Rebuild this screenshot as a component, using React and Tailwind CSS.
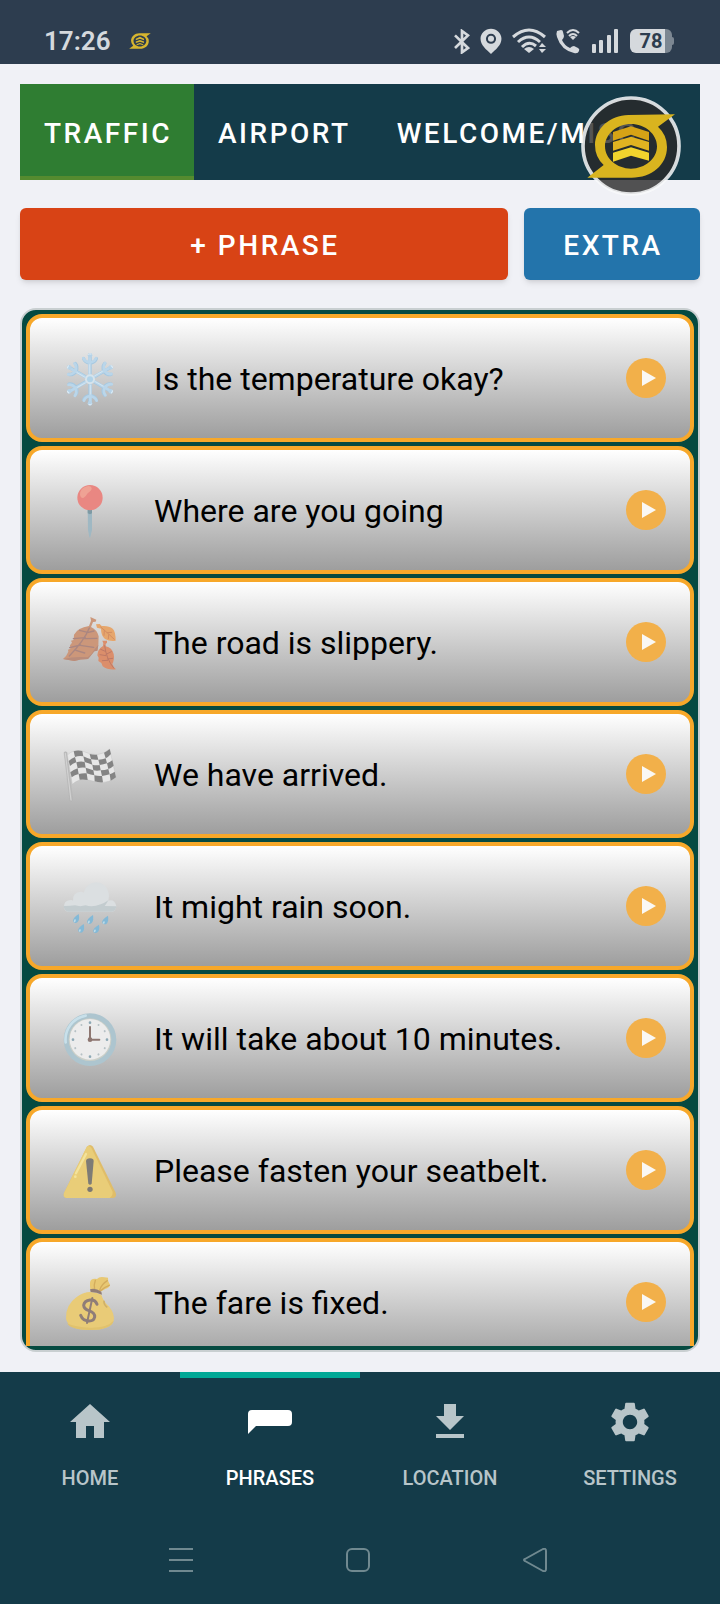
import { MdFileDownload, MdSettings } from "react-icons/md";

// Emoji style drawings, one for each phrase
const Snowflake = () => (
  <svg viewBox="180 144 180 180" className="size-[60px] shrink-0" aria-hidden="true">
    {[0, 60, 120, 180, 240, 300].map((angle) => (
      <g key={angle} transform={`rotate(${angle} 270 238)`} fill="none" strokeLinecap="round" strokeLinejoin="round">
        <path d="M270 222V166M251 176Q254 187 270 190Q286 187 289 176" stroke="#a5c8e1" strokeWidth="10" />
        <path d="M269 222V166M250 174Q254 185 270 188Q285 185 288 174" stroke="#bad6ea" strokeWidth="8" />
        <path d="M268 220V194" stroke="#dcebf4" strokeWidth="2" />
        <circle cx="270" cy="166" r="7" fill="#b6d3e8" />
        <path d="M266 163Q269 160 273 162" stroke="#e3eff6" strokeWidth="3" />
      </g>
    ))}
    <circle cx="270" cy="238" r="15" fill="#d7e4ec" />
    <circle cx="270" cy="238" r="9" fill="#b0d3e9" />
  </svg>
);

const Pin = () => (
  <svg viewBox="180 540 180 180" className="size-[60px] shrink-0" aria-hidden="true">
    <path d="M263 625H276V690L271 711Q270 716 268 711L264 690Z" fill="#9fb8c3" />
    <path d="M263 625H276V640Q270 645 263 640Z" fill="#7d9aa4" />
    <circle cx="270" cy="593" r="38" fill="#e98782" />
    <path d="M240 583Q241 565 257 560Q272 555 275 564Q276 571 263 580Q257 591 250 594Q241 595 240 583Z" fill="#efa294" />
  </svg>
);

const Leaves = () => (
  <svg viewBox="120 96 180 180" className="size-[60px] shrink-0" aria-hidden="true">
    <path d="M211 111L229 119L227 125L219 126L213 141Q232 150 236 169L235 195L232 212L223 214L211 229L204 237Q180 237 163 243L129 237Q139 230 145 215L144 209L151 206L150 196L156 188L153 182L161 180L162 164Q173 143 207 138L213 122Z" fill="#cc977a" />
    <path d="M129 237Q165 228 203 232Q216 222 225 206L235 195L232 212L223 214L204 237Q180 237 163 243Z" fill="#b98c7b" />
    <path d="M208 144Q193 181 148 228M203 157L179 151M196 173L160 176M182 195L149 203M202 158L222 153M194 176L231 175M181 196L221 202M168 211L194 219" fill="none" stroke="#aa8681" strokeWidth="4" strokeLinecap="round" />
    <path d="M228 133L239 132L245 138Q266 136 278 146Q287 154 287 182Q270 185 255 177Q243 167 243 146L231 143Z" fill="#e6a66c" />
    <path d="M242 141Q262 158 283 178M253 151L252 166M261 158L275 157M266 164L265 176" fill="none" stroke="#d48d62" strokeWidth="3" strokeLinecap="round" />
    <path d="M247 182H261V188L257 192V199Q276 203 281 222Q284 239 277 252Q280 262 288 268Q264 271 248 259L244 249L235 243L236 233L232 226Q233 207 249 198L250 190Z" fill="#db8e6b" />
    <path d="M254 197Q259 238 281 264M256 214L242 208M258 227L240 224M263 241L247 242M258 223L274 215M262 237L278 235" fill="none" stroke="#bd7966" strokeWidth="3" strokeLinecap="round" />
  </svg>
);

const RaceFlag = () => (
  <svg viewBox="120 492 180 180" className="size-[60px] shrink-0" aria-hidden="true">
    <path d="M132 517Q136 513 141 517L158 661Q155 666 150 663Z" fill="#bdbdbd" stroke="#aaa" strokeWidth="1" />
    <path d="M136 519L153 661" stroke="#d3d3d3" strokeWidth="3" />
    <path d="M142 525Q160 507 187 513Q210 524 231 524Q254 521 269 507L288 592Q267 608 243 608Q218 603 196 598Q173 598 157 613Z" fill="#e7e7e7" stroke="#b9b9b9" strokeWidth="1" />
    <g fill="#848484">
      <path d="M161 514Q173 509 187 513L190 529Q177 526 165 531Z" />
      <path d="M209 522Q220 525 231 524L235 539Q224 540 213 538Z" />
      <path d="M252 518Q261 514 269 507L273 522Q265 531 257 535Z" />
      <path d="M146 543Q154 535 165 531L169 547Q158 551 150 558Z" />
      <path d="M190 529Q202 535 213 538L217 554Q205 550 194 546Z" />
      <path d="M235 539Q247 539 257 535L261 550Q250 554 239 555Z" />
      <path d="M169 547Q182 543 194 546L197 563Q185 561 173 565Z" />
      <path d="M217 554Q228 557 239 555L242 571Q231 573 220 571Z" />
      <path d="M261 550Q269 547 277 541L281 557Q274 564 265 567Z" />
      <path d="M151 577Q160 569 173 565L176 582Q164 585 155 592Z" />
      <path d="M197 563Q209 567 220 571L223 586Q212 585 200 580Z" />
      <path d="M242 571Q255 571 265 567L269 583Q257 587 246 588Z" />
      <path d="M176 582Q188 579 200 580L203 600Q191 597 179 599Z" />
      <path d="M223 586Q234 589 246 588L249 607Q235 608 224 604Z" />
      <path d="M269 583Q277 580 284 575L288 592Q281 598 272 602Z" />
    </g>
  </svg>
);

const RainCloud = () => (
  <svg viewBox="120 48 180 180" className="size-[60px] shrink-0" aria-hidden="true">
    <path d="M132 140Q132 124 147 121Q156 119 159 122Q158 99 177 96Q186 93 191 98Q197 70 228 67Q263 69 267 107L265 122Q284 117 289 138Q287 154 276 155H144Q133 154 132 140Z" fill="#dbdfe1" />
    <path d="M131 138Q153 138 165 136Q181 141 197 136Q217 143 242 133Q254 129 265 121Q259 132 254 138L289 139Q286 155 275 155H144Q132 152 131 138Z" fill="#c3cccf" />
    <g fill="#83b9d7">
      <path d="M176 162Q180 178 173 186Q166 192 160 185Q156 175 176 162Z" />
      <path d="M219 165Q222 181 215 189Q208 195 202 188Q198 178 219 165Z" />
      <path d="M264 167Q267 183 260 191Q253 196 247 189Q243 180 264 167Z" />
      <path d="M191 192Q195 207 188 216Q181 221 175 214Q171 205 191 192Z" />
      <path d="M237 194Q240 209 233 217Q226 222 220 216Q216 206 237 194Z" />
    </g>
    <path d="M165 180L164 184M207 184L206 188M252 186L251 189M180 210L179 213M225 211L224 214" stroke="#bcdbe9" strokeWidth="5" strokeLinecap="round" />
  </svg>
);

const Clock = () => (
  <svg viewBox="120 444 180 180" className="size-[60px] shrink-0" aria-hidden="true">
    <circle cx="210" cy="539" r="79" fill="#adc5cf" />
    <path d="M137 547A73 73 0 0 1 197 467" fill="none" stroke="#c8e0ea" strokeWidth="8" strokeLinecap="round" />
    <circle cx="210" cy="539" r="64" fill="#cbcfc8" />
    <circle cx="210" cy="538" r="61" fill="#ececec" />
    {[0, 30, 60, 90, 120, 150, 180, 210, 240, 270, 300, 330].map((angle) => (
      <circle key={angle} cx="210" cy="488" r={angle % 90 === 0 ? 4 : 3} fill={angle % 90 === 0 ? "#8da9b5" : "#b6c1c5"} transform={`rotate(${angle} 210 539)`} />
    ))}
    <path d="M210 501V539H238" fill="none" stroke="#8d7670" strokeWidth="6" strokeLinecap="round" />
    <circle cx="210" cy="539" r="7" fill="#8d7670" />
  </svg>
);

const Warning = () => (
  <svg viewBox="120 60 180 180" className="size-[60px] shrink-0" aria-hidden="true">
    <path d="M201 80Q210 70 219 80L287 218Q291 232 279 234H140Q128 232 132 219Z" fill="#e0bd69" />
    <path d="M200 81Q207 74 214 83L277 214Q281 225 269 234H140Q128 232 132 219Z" fill="#e9cd78" />
    <path d="M198 102L168 160" stroke="#f3e39b" strokeWidth="7" strokeLinecap="round" />
    <circle cx="166" cy="170" r="4" fill="#f3e39b" />
    <path d="M198 123Q199 115 210 115Q221 115 221 123L215 191Q210 197 205 191Z" fill="#7d7b76" />
    <circle cx="210" cy="208" r="8" fill="#7d7872" />
  </svg>
);

const MoneyBag = () => (
  <svg viewBox="120 456 180 180" className="size-[60px] shrink-0" aria-hidden="true">
    <path d="M211 507Q208 485 213 480Q221 474 231 477Q238 469 253 472L264 473Q262 483 270 494Q269 502 256 507L241 515Z" fill="#e8c873" />
    <path d="M226 481Q221 494 224 508M262 482Q244 493 239 511M268 496Q253 501 242 512" fill="none" stroke="#d3ac5d" strokeWidth="4" strokeLinecap="round" />
    <path d="M211 516Q228 516 244 524Q250 545 268 560Q285 583 281 602Q274 629 210 630Q144 629 138 596Q136 555 170 531Q191 516 211 516Z" fill="#e9cb77" />
    <path d="M141 610Q165 622 211 623Q260 624 281 602Q274 629 210 630Q152 630 141 610Z" fill="#e1c26d" />
    <path d="M252 542Q251 555 262 562" fill="none" stroke="#cfaf68" strokeWidth="5" />
    <path d="M210 508Q226 503 244 515L246 524Q230 516 212 516Z" fill="#927d76" />
    <g fill="none" stroke="#8f7d78" strokeLinecap="round">
      <path d="M231 553Q226 538 210 540Q193 542 191 556Q192 567 207 572Q225 578 224 591Q221 604 205 603Q188 602 182 586" strokeWidth="9" />
      <path d="M217 534L201 609" strokeWidth="6" />
    </g>
  </svg>
);

const tabs = ["TRAFFIC", "AIRPORT", "WELCOME/MISC"];

const phrases = [
  { text: "Is the temperature okay?", Icon: Snowflake },
  { text: "Where are you going", Icon: Pin },
  { text: "The road is slippery.", Icon: Leaves },
  { text: "We have arrived.", Icon: RaceFlag },
  { text: "It might rain soon.", Icon: RainCloud },
  { text: "It will take about 10 minutes.", Icon: Clock },
  { text: "Please fasten your seatbelt.", Icon: Warning },
  { text: "The fare is fixed.", Icon: MoneyBag },
];

const House = ({ className }) => (
  <svg viewBox="0 0 24 24" className={className} fill="currentColor" aria-hidden="true">
    <path d="M10 20v-6h4v6h5v-8h3L12 3 2 12h3v8z" />
  </svg>
);

const PhraseBubble = ({ className }) => (
  <svg viewBox="0 0 48 48" className={className} fill="currentColor" aria-hidden="true">
    <path d="M6 12H42Q46 12 46 16V24Q46 28 42 28H10L2 36V16Q2 12 6 12Z" />
  </svg>
);

const navItems = [
  { label: "HOME", Icon: House },
  { label: "PHRASES", Icon: PhraseBubble, active: true },
  { label: "LOCATION", Icon: MdFileDownload },
  { label: "SETTINGS", Icon: MdSettings },
];

// Ring with two pointed ends, shared by the floating button and the status bar
const LogoRing = () => (
  <path
    fillRule="evenodd"
    d="M315 88L264 125Q291 150 291 186C291 240 245 278 185 278H52L101 240Q75 216 75 180C76 130 120 91 175 90ZM183 117C141 117 105 147 105 184S141 251 183 251S261 221 261 184S225 117 183 117Z"
  />
);

const StatusBar = () => (
  <header className="flex h-16 shrink-0 items-center justify-between bg-[#2d3d4f] pt-[18px] pr-[46px] pl-11 text-[#d5d9dd]">
    <div className="flex items-center gap-[18px]">
      <span className="text-[26px] leading-8 font-semibold">17:26</span>
      <svg viewBox="50 86 268 194" className="h-4 w-[22px]" fill="#d6b52f" aria-hidden="true">
        <LogoRing />
        <path d="M133 155L183 132L233 155V174L183 155L133 174ZM133 190L183 170L233 190V208L183 191L133 208ZM143 222L183 206L223 222V236L183 222L143 236Z" />
      </svg>
    </div>
    <div className="flex items-center">
      <svg viewBox="94 85 48 75" className="mr-[10px] h-[25px] w-4" fill="none" stroke="currentColor" strokeWidth="8" aria-hidden="true">
        <path d="M97 104L136 142L118 155V91L136 104L97 142" />
      </svg>
      <svg viewBox="172 85 64 77" className="mr-[10px] h-[26px] w-[22px]" fill="currentColor" fillRule="evenodd" aria-hidden="true">
        <path d="M204 87C221 87 235 100 235 117C235 136 218 149 204 162C190 149 173 136 173 117C173 100 187 87 204 87ZM204 102A15 15 0 1 0 204 132A15 15 0 1 0 204 102Z" />
        <circle cx="204" cy="117" r="9" />
      </svg>
      <svg viewBox="0 0 34 26" className="mr-[10px] h-[26px] w-[34px]" aria-hidden="true">
        <g fill="none" stroke="currentColor" strokeWidth="3">
          <path d="M1 9Q17 -5 33 9" />
          <path d="M6 14Q17 4 28 14" />
          <path d="M10 19Q17 12 24 18" />
        </g>
        <path d="M12 21Q17 17 22 21L17 25Z" fill="currentColor" />
        <path d="M27 19L30 15L34 19ZM27 21H34L30 25Z" fill="currentColor" />
      </svg>
      <svg viewBox="0 0 24 26" className="mr-3 h-[26px] w-6" fill="currentColor" aria-hidden="true">
        <path d="M1 3L5 2Q7 2 7 4L8 8Q8 10 6 12Q8 17 14 20Q16 18 18 18L22 20Q24 21 23 23Q22 26 18 25Q5 22 1 9Q0 5 1 3Z" />
        <path d="M11 5Q17 -1 23 5M13 8Q17 4 21 8" fill="none" stroke="currentColor" strokeWidth="2" />
        <path d="M14 9Q17 7 20 9L17 12Z" />
      </svg>
      <svg viewBox="0 0 26 24" className="mr-3 h-6 w-[26px]" fill="currentColor" aria-hidden="true">
        <rect x="0" y="15" width="4" height="9" rx="1" />
        <rect x="7" y="11" width="4" height="13" rx="1" />
        <rect x="15" y="6" width="4" height="18" rx="1" />
        <rect x="22" y="0" width="4" height="24" rx="1" />
      </svg>
      <div className="flex items-center">
        <span className="flex h-6 w-[42px] items-center justify-center rounded-md bg-linear-to-r from-[#d5d9dd] from-83% to-[#7c8792] to-83% text-xl leading-6 font-bold text-[#2d3d4f]">
          78
        </span>
        <span className="h-2 w-[2px] rounded-r bg-[#7c8792]" />
      </div>
    </div>
  </header>
);

const FloatingLogo = () => (
  <button type="button" aria-label="Assistant" className="absolute top-3 right-[19px] size-[100px] rounded-full">
    <svg viewBox="33 33 300 300" className="size-full overflow-visible" aria-hidden="true">
      <circle cx="183" cy="183" r="144" fill="#292929" fillOpacity="0.8" />
      <circle cx="183" cy="183" r="144" fill="none" stroke="#f8f9fa" strokeOpacity="0.85" strokeWidth="11" />
      <g fill="#d9b41f">
        <LogoRing />
      </g>
      <path d="M129 141L183 124L237 141V167L183 149L129 167Z" fill="#d6a316" />
      <path d="M129 171L183 155L237 171V197L183 180L129 197Z" fill="#e0b321" />
      <path d="M129 203L183 187L237 203V227L183 212L129 230Z" fill="#f1d42d" />
    </svg>
  </button>
);

const PhraseRow = ({ text, Icon }) => (
  <li className="shrink-0">
    <button
      type="button"
      className="flex h-32 w-full items-center rounded-2xl border-4 border-[#f7a82a] bg-linear-to-b from-white to-[#9e9e9e] pr-6 pl-[30px] text-left text-[32px] leading-10 text-black"
    >
      <Icon />
      <span className="ml-[34px] flex-1 pt-[2px]">{text}</span>
      <svg viewBox="0 0 40 40" className="size-10 shrink-0" aria-hidden="true">
        <circle cx="20" cy="20" r="20" fill="#f2b04a" />
        <path d="M16 12V28L30 20Z" fill="#faf8f4" />
      </svg>
    </button>
  </li>
);

const BottomNav = () => (
  <nav className="grid shrink-0 grid-cols-4">
    {navItems.map(({ label, Icon, active }) => (
      <a
        key={label}
        href={`#${label.toLowerCase()}`}
        className={
          active
            ? "flex h-36 flex-col items-center border-t-[6px] border-[#00a896] pt-5 text-white"
            : "flex h-36 flex-col items-center border-t-[6px] border-transparent pt-5 text-[#b8c5c9]"
        }
      >
        <Icon className="size-12" />
        <span className="mt-5 text-xl leading-6 font-medium">{label}</span>
      </a>
    ))}
  </nav>
);

const SystemBar = () => (
  <div className="grid h-[88px] shrink-0 grid-cols-3 items-center justify-items-center pr-24 pl-[92px] text-[#708990]">
    <button type="button" aria-label="Recent apps">
      <svg viewBox="0 0 24 24" className="size-6" stroke="currentColor" strokeWidth="2">
        <path d="M0 1H24M0 12H24M0 23H24" />
      </svg>
    </button>
    <button type="button" aria-label="Home screen">
      <svg viewBox="0 0 24 24" className="size-6" fill="none" stroke="currentColor" strokeWidth="2">
        <rect x="1" y="1" width="22" height="22" rx="5" />
      </svg>
    </button>
    <button type="button" aria-label="Back">
      <svg viewBox="0 0 24 24" className="size-6" fill="none" stroke="currentColor" strokeWidth="2" strokeLinejoin="round">
        <path d="M2 11L20 1Q23 0 23 3V21Q23 24 20 23L2 13Q0 12 2 11Z" />
      </svg>
    </button>
  </div>
);

const App = () => (
  <div className="flex h-screen flex-col bg-[#f0f1f6] font-[Roboto,sans-serif]">
    <StatusBar />

    <main className="flex min-h-0 flex-1 flex-col p-5">
      <div className="relative">
        <div className="flex h-24 overflow-hidden bg-[#143b49]" role="tablist">
          {tabs.map((tab, index) => (
            <button
              key={tab}
              type="button"
              role="tab"
              aria-selected={index === 0}
              className={
                index === 0
                  ? "shrink-0 border-b-4 border-[#558b2f] bg-[#2f7d32] pt-2 pr-[22px] pl-6 text-[28px] leading-8 font-medium tracking-[0.09em] text-white"
                  : "shrink-0 pt-1 pr-[22px] pl-6 text-[28px] leading-8 font-medium tracking-[0.09em] text-white"
              }
            >
              {tab}
            </button>
          ))}
        </div>
        <FloatingLogo />
      </div>

      <div className="mt-7 flex gap-4 text-[28px] leading-8 font-medium tracking-[0.09em] text-white">
        <button type="button" className="h-[72px] flex-1 rounded-md bg-[#d84315] pt-1 pl-[2px] shadow-md">
          + PHRASE
        </button>
        <button type="button" className="h-[72px] w-44 rounded-md bg-[#2374ab] pt-1 pl-[2px] shadow-md">
          EXTRA
        </button>
      </div>

      <div className="mt-7 flex min-h-0 flex-1 flex-col overflow-hidden rounded-2xl border-2 border-[#c9cfd1] bg-[#054a41] p-1">
        <ul className="flex min-h-0 flex-1 flex-col gap-1 overflow-hidden">
          {phrases.map((phrase) => (
            <PhraseRow key={phrase.text} {...phrase} />
          ))}
        </ul>
      </div>
    </main>

    <footer className="shrink-0 bg-[#143b49]">
      <BottomNav />
      <SystemBar />
    </footer>
  </div>
);

export default App;
